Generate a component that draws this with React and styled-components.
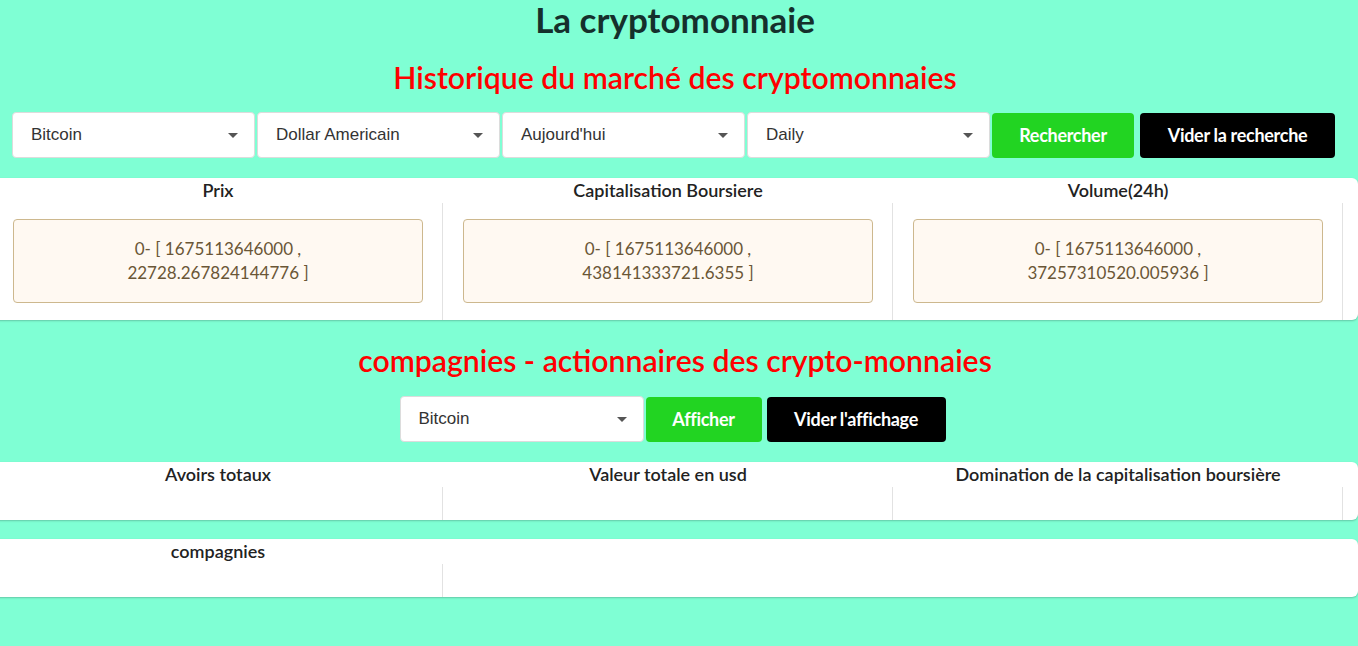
import React from "react";
import styled, { createGlobalStyle } from "styled-components";

const GlobalStyle = createGlobalStyle`
  html, body {
    margin: 0;
    padding: 0;
    background: #7fffd4;
    font-family: Lato, "Liberation Sans", sans-serif;
    overflow-x: hidden;
  }
`;

const Page = styled.div`
  display: flex;
  flex-direction: column;
  padding-bottom: 40px;
`;

const Title = styled.h1`
  margin: 0;
  padding-right: 8px;
  text-align: center;
  font-size: 35px;
  line-height: 38px;
  font-weight: 700;
  color: #15302c;
`;

const SectionTitle = styled.h2`
  margin: ${(p) => p.$top}px 0 0;
  padding-right: 8px;
  text-align: center;
  font-size: 30.2px;
  line-height: 36px;
  font-weight: 600;
  color: #ff0000;
`;

const Toolbar = styled.div`
  display: flex;
  align-items: center;
  margin-top: ${(p) => p.$top}px;
  justify-content: ${(p) => (p.$center ? "center" : "flex-start")};
  padding: ${(p) => (p.$center ? "0 13px 0 0" : "0 0 0 12px")};
`;

const SelectBox = styled.div`
  box-sizing: border-box;
  width: ${(p) => p.$w}px;
  height: 46px;
  margin-right: 2px;
  padding: 0 16px 0 18px;
  display: flex;
  align-items: center;
  justify-content: space-between;
  background: #fff;
  border: 1px solid #dcdcdc;
  border-radius: 4px;
  font-family: "Liberation Sans", Arial, sans-serif;
  font-size: 17px;
  color: #333;
`;

const Caret = styled.span`
  width: 0;
  height: 0;
  border-left: 5px solid transparent;
  border-right: 5px solid transparent;
  border-top: 5px solid #555;
  margin-top: 1px;
`;

const Button = styled.button`
  box-sizing: border-box;
  width: ${(p) => p.$w}px;
  height: 45px;
  margin-right: ${(p) => p.$gap || 0}px;
  border: none;
  border-radius: 4px;
  background: ${(p) => (p.$dark ? "#000" : "#22d422")};
  color: #fff;
  font-family: Lato, "Liberation Sans", sans-serif;
  font-weight: 700;
  font-size: 18px;
  letter-spacing: -0.3px;
  cursor: pointer;
`;

const Card = styled.div`
  margin: ${(p) => p.$top}px 0 0 -7px;
  background: #fff;
  border-radius: 0 6px 6px 0;
  box-shadow: 0 1px 2px rgba(0, 0, 0, 0.22);
  display: grid;
  grid-template-columns: ${(p) => p.$cols};
`;

const HeadCell = styled.div`
  height: 25px;
  line-height: 24px;
  text-align: center;
  font-size: 18px;
  font-weight: 600;
  color: #222;
  white-space: nowrap;
`;

const BodyCell = styled.div`
  box-sizing: border-box;
  min-height: ${(p) => p.$h}px;
  padding: 16px 19px 17px 20px;
  border-right: ${(p) => (p.$line ? "1px solid #e2e2e2" : "none")};
`;

const ValueBox = styled.div`
  box-sizing: border-box;
  height: 84px;
  display: flex;
  align-items: center;
  justify-content: center;
  text-align: center;
  background: #fff9f2;
  border: 1px solid #cdb88e;
  border-radius: 4px;
  font-size: 17px;
  line-height: 24px;
  color: #6a5636;
`;

const market = [
  { label: "Prix", value: "22728.267824144776" },
  { label: "Capitalisation Boursiere", value: "438141333721.6355" },
  { label: "Volume(24h)", value: "37257310520.005936" },
];

const holdings = ["Avoirs totaux", "Valeur totale en usd", "Domination de la capitalisation boursière"];

function Select({ w, children }) {
  return (
    <SelectBox $w={w}>
      <span>{children}</span>
      <Caret />
    </SelectBox>
  );
}

export default function App() {
  return (
    <Page>
      <GlobalStyle />
      <Title>La cryptomonnaie</Title>
      <SectionTitle $top={21}>Historique du marché des cryptomonnaies</SectionTitle>
      <Toolbar $top={17}>
        <Select w={243}>Bitcoin</Select>
        <Select w={243}>Dollar Americain</Select>
        <Select w={243}>Aujourd'hui</Select>
        <Select w={243}>Daily</Select>
        <Button $w={142} $gap={6}>Rechercher</Button>
        <Button $w={195} $dark>Vider la recherche</Button>
      </Toolbar>

      <Card $top={20} $cols="450px 450px 450px 1fr">
        {market.map((m) => (
          <HeadCell key={m.label}>{m.label}</HeadCell>
        ))}
        <HeadCell />
        {market.map((m) => (
          <BodyCell key={m.label} $h={117} $line>
            <ValueBox>
              0- [ 1675113646000 ,
              <br />
              {m.value} ]
            </ValueBox>
          </BodyCell>
        ))}
        <BodyCell $h={117} />
      </Card>

      <SectionTitle $top={22}>compagnies - actionnaires des crypto-monnaies</SectionTitle>
      <Toolbar $top={18} $center>
        <Select w={244}>Bitcoin</Select>
        <Button $w={116} $gap={5}>Afficher</Button>
        <Button $w={179} $dark>Vider l'affichage</Button>
      </Toolbar>

      <Card $top={20} $cols="450px 450px 450px 1fr">
        {holdings.map((h) => (
          <HeadCell key={h}>{h}</HeadCell>
        ))}
        <HeadCell />
        {holdings.map((h) => (
          <BodyCell key={h} $h={32} $line />
        ))}
        <BodyCell $h={32} />
      </Card>

      <Card $top={19} $cols="450px 1fr">
        <HeadCell>compagnies</HeadCell>
        <HeadCell />
        <BodyCell $h={32} $line />
        <BodyCell $h={32} />
      </Card>
    </Page>
  );
}
